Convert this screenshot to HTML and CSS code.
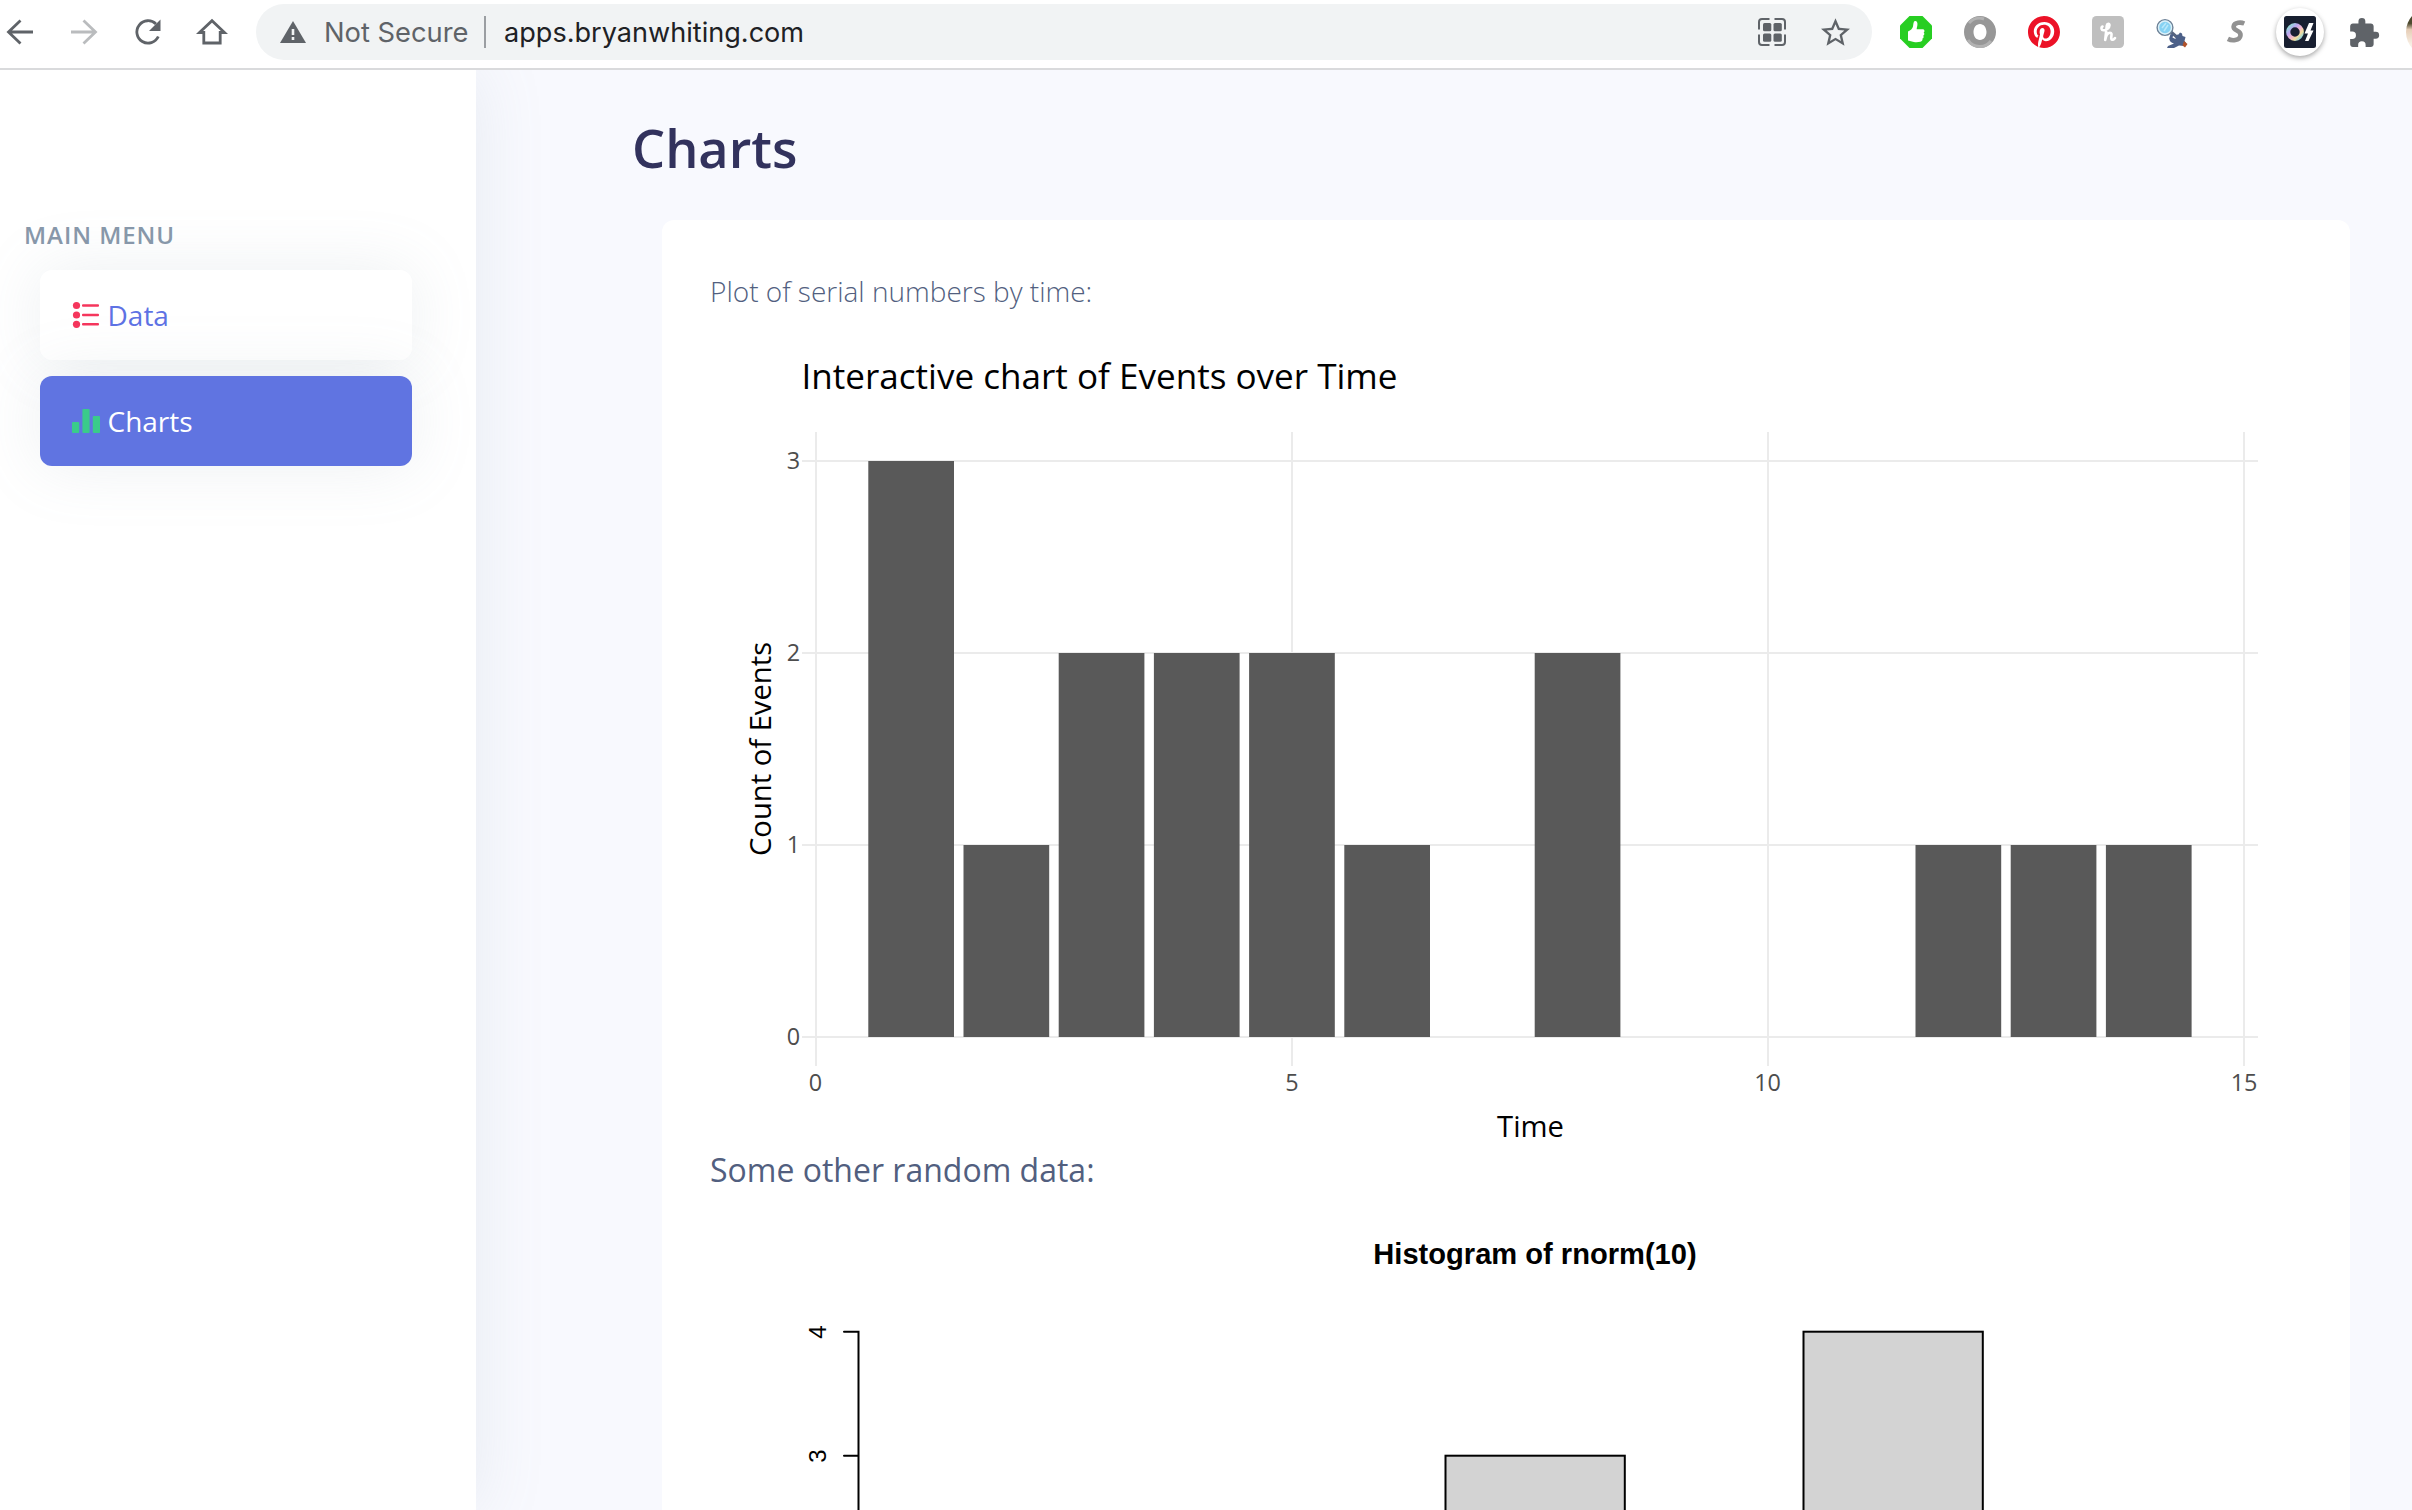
FILE: index.html
```html
<!DOCTYPE html>
<html lang="en">
<head>
<meta charset="utf-8">
<title>Charts</title>
<link rel="stylesheet" href="styles.css">
</head>
<body>
<header class="toolbar">
  <nav class="nav-buttons">
    <svg class="tool" viewBox="0 0 32 32"><path d="M29 16H5M16.500 4.500L4.500 16l12 11.500"/></svg>
    <svg class="tool tool-off" viewBox="0 0 32 32"><path d="M3 16h24M15.500 4.500l12 11.500-12 11.500"/></svg>
    <svg class="tool" viewBox="0 0 32 32"><path d="M26.300 20.500a11.200 11.200 0 1 1-2.300-12.500"/><path class="solid" d="M28.500 3.500v11.500h-11.500z"/></svg>
    <svg class="tool" viewBox="0 0 32 32"><path d="M3.500 16.500L16 4.700l12.500 11.800h-4.300V27H7.800V16.500z"/></svg>
  </nav>
  <div class="address">
    <svg class="warn" viewBox="0 0 26 22"><path d="M13 0L26 22H0z" fill="#5f6368"/><path d="M13 8v6M13 16v3" stroke="#f1f3f4" stroke-width="2.600"/></svg>
    <span class="insecure">Not Secure</span>
    <span class="divider"></span>
    <span class="url">apps.bryanwhiting.com</span>
    <svg class="qr" viewBox="0 0 30 30"><g fill="none" stroke="#5f6368" stroke-width="2"><path d="M12.500 2H5a3 3 0 0 0-3 3v7.500M17.500 2H25a3 3 0 0 1 3 3v7.500M12.500 28H5a3 3 0 0 1-3-3v-7.500M17.500 28H25a3 3 0 0 0 3-3v-7.500"/></g><g fill="#5f6368"><rect x="6" y="6" width="8.300" height="8.300" rx="1.500"/><rect x="16.500" y="6" width="8.300" height="8.300" rx="1.500"/><rect x="6" y="16.500" width="8.300" height="8.300" rx="1.500"/><rect x="16.500" y="16.500" width="8.300" height="8.300" rx="1.500"/></g></svg>
    <svg class="star" viewBox="2 2 20 19"><path fill="#5f6368" d="M22 9.240l-7.190-.620L12 2 9.190 8.630 2 9.240l5.460 4.730L5.820 21 12 17.270 18.180 21l-1.630-7.030L22 9.240zM12 15.400l-3.760 2.270 1-4.280-3.320-2.880 4.380-.380L12 6.100l1.710 4.040 4.380.380-3.320 2.880 1 4.280L12 15.400z"/></svg>
  </div>
  <div class="extensions">
    <svg viewBox="0 0 32 32"><path fill="#27ce22" d="M9.500 0h13L32 9.500v13L22.500 32h-13L0 22.500v-13z"/><path fill="#fff" d="M8 15.500c2.500-1 4.500-3 5-5 .4-2 .3-5 1.800-5.500 2-.4 3 1.500 2.600 4-.2 1.700-.7 3-.7 4.200h6c2 0 2.300 2.600.9 3.300 1.200.900.900 2.700-.4 3.200.8 1 .400 2.500-.8 2.900.5 1.200-.3 2.900-2 3.200-3 .6-6.500.5-8.500-.3L8 24.500z"/></svg>
    <svg viewBox="0 0 32 32"><path fill="#979797" fill-rule="evenodd" d="M16 0a16 16 0 1 0 0 32 16 16 0 0 0 0-32zm0 8c3.800 0 6.500 3.600 6.500 8s-2.700 8-6.500 8-6.500-3.600-6.500-8 2.700-8 6.500-8z"/><path fill="none" stroke="#b2b2b2" stroke-width="3" d="M4 24a14 14 0 0 0 23 1M5 7a14 14 0 0 1 15-4"/></svg>
    <svg viewBox="0 0 24 24"><circle cx="12" cy="12" r="11.500" fill="#fff"/><path fill="#ec1227" d="M12 0C5.373 0 0 5.372 0 12c0 5.084 3.163 9.426 7.627 11.174-.105-.949-.2-2.405.042-3.441.218-.937 1.407-5.965 1.407-5.965s-.359-.719-.359-1.782c0-1.668.967-2.914 2.171-2.914 1.023 0 1.518.769 1.518 1.690 0 1.029-.655 2.568-.994 3.995-.283 1.194.599 2.169 1.777 2.169 2.133 0 3.772-2.249 3.772-5.495 0-2.873-2.064-4.882-5.012-4.882-3.414 0-5.418 2.561-5.418 5.207 0 1.031.397 2.138.893 2.738.98.119.112.224.083.345l-.333 1.360c-.53.220-.174.267-.402.161-1.499-.698-2.436-2.889-2.436-4.649 0-3.785 2.750-7.262 7.929-7.262 4.163 0 7.398 2.967 7.398 6.931 0 4.136-2.607 7.464-6.227 7.464-1.216 0-2.359-.631-2.750-1.378l-.748 2.853c-.271 1.043-1.002 2.350-1.492 3.146 1.124.347 2.317.535 3.554.535 6.627 0 12-5.373 12-12C24 5.372 18.627 0 12 0z"/></svg>
    <svg viewBox="0 0 32 32"><rect width="32" height="32" rx="4.500" fill="#bfbfbf"/><path fill="none" stroke="#fff" stroke-width="2.600" stroke-linecap="round" stroke-linejoin="round" d="M10.500 10.500c-1.800 1-1.200 3.700.8 3.700 3.200 0 6.200-2.500 6.200-5 0-2-2.300-2-2.700.3L13.200 24c.8-4 2.500-7.200 4.800-7.200 2.800 0 .8 4 1.300 6 .5 1.600 2.500 1 3.700-.8"/></svg>
    <svg viewBox="0 0 32 32"><path d="M15 16l7 6" stroke="#56647f" stroke-width="3"/><circle cx="9" cy="11.500" r="7.800" fill="#86d2f3" stroke="#6f8297" stroke-width="1.600"/><circle cx="9" cy="11.500" r="6.500" fill="none" stroke="#dceff7" stroke-width="1.400"/><path d="M6 12l4-5M8 15l4-6" stroke="#b9e8fa" stroke-width="1.500"/><path fill="#4c6088" d="M14.500 18l3 .5-1 3 3 1.500c0-3 1.500-5 3-4.500l1.500-2 2 1 .5 2.500 3 1-1 4 1.500 2-2 3-5-.500-5 2.500H11l1-2 6-2.500c-3-.5-4.500-2.500-4.800-5z"/><path d="M28 25l3.500 3-2.500 3.500-2.500-2z" fill="#b0522b"/></svg>
    <svg viewBox="0 0 32 32"><path fill="none" stroke="#929292" stroke-width="4.600" d="M24.300 7.500c-3-1.300-10-1.500-10.700 3-.6 4.500 7.900 3.700 6.900 9.100-.9 5.200-8.600 5.400-12.600 3.300"/></svg>
    <div class="active-ext"><svg viewBox="0 0 32 32"><defs><linearGradient id="ring" x1="0" y1="0" x2="1" y2="1"><stop offset="0" stop-color="#8ee8d0"/><stop offset=".3" stop-color="#b8a6f2"/><stop offset=".55" stop-color="#f0b3cd"/><stop offset=".75" stop-color="#f3dc9c"/><stop offset="1" stop-color="#7ad5ec"/></linearGradient></defs><rect width="32" height="32" rx="2.500" fill="#181f30"/><circle cx="11" cy="16" r="6.800" fill="none" stroke="url(#ring)" stroke-width="4.200"/><path fill="#fff" d="M25 7h4.500l-3 7.500h3L24.500 25H21l3-7.500h-3.500z"/></svg></div>
    <svg class="puzzle" viewBox="2 1 21.500 21"><path fill="#5f6368" d="M20.500 11H19V7c0-1.100-.9-2-2-2h-4V3.500a2.500 2.500 0 0 0-5 0V5H4c-1.100 0-1.990.9-1.990 2v3.800H3.500a2.700 2.700 0 0 1 0 5.400H2V20c0 1.100.9 2 2 2h3.800v-1.500a2.700 2.700 0 0 1 5.400 0V22H17c1.100 0 2-.9 2-2v-4h1.500a2.500 2.500 0 0 0 0-5z"/></svg>
    <span class="avatar"></span>
  </div>
</header>
<div class="app">
  <aside class="sidebar">
    <h6 class="menu-title">MAIN MENU</h6>
    <a class="menu-item"><svg viewBox="0 0 28 28"><g fill="#f5365c"><circle cx="4.500" cy="4.500" r="3.600"/><circle cx="4.500" cy="14" r="3.600"/><circle cx="4.500" cy="23.300" r="3.600"/><rect x="10" y="3.200" width="17" height="2.600" rx="1"/><rect x="10" y="12.700" width="17" height="2.600" rx="1"/><rect x="10" y="22" width="17" height="2.600" rx="1"/></g></svg><span>Data</span></a>
    <a class="menu-item active"><svg viewBox="0 0 28 28"><g fill="#3acb8a"><rect y="15" width="7.200" height="11" rx="1"/><rect x="10.400" y="2" width="7.200" height="24" rx="1"/><rect x="20.800" y="9" width="7.200" height="17" rx="1"/></g></svg><span>Charts</span></a>
  </aside>
  <main class="content">
    <h1 class="page-title">Charts</h1>
    <section class="card">
      <p class="lead">Plot of serial numbers by time:</p>
      <svg class="events" viewBox="710 340 1600 810">
        <g class="grid" stroke-width="2">
          <path d="M802 461H2258M802 653H2258M802 845H2258M802 1037H2258"/>
          <path d="M816 432V1066M1292 432V1066M1768 432V1066M2244 432V1066"/>
        </g>
        <g fill="#595959">
          <rect x="868.300" y="461" width="85.700" height="576"/>
          <rect x="963.500" y="845" width="85.700" height="192"/>
          <rect x="1058.700" y="653" width="85.700" height="384"/>
          <rect x="1153.900" y="653" width="85.700" height="384"/>
          <rect x="1249.100" y="653" width="85.700" height="384"/>
          <rect x="1344.300" y="845" width="85.700" height="192"/>
          <rect x="1534.700" y="653" width="85.700" height="384"/>
          <rect x="1915.500" y="845" width="85.700" height="192"/>
          <rect x="2010.700" y="845" width="85.700" height="192"/>
          <rect x="2105.900" y="845" width="85.700" height="192"/>
        </g>
        <text class="plot-title" x="801.500" y="388.500">Interactive chart of Events over Time</text>
        <g class="ticks" text-anchor="end"><text x="800" y="469">3</text><text x="800" y="661">2</text><text x="800" y="853">1</text><text x="800" y="1045">0</text></g>
        <g class="ticks" text-anchor="middle"><text x="815.500" y="1091">0</text><text x="1292" y="1091">5</text><text x="1767.500" y="1091">10</text><text x="2244" y="1091">15</text></g>
        <text class="axis-title" text-anchor="middle" x="1530.500" y="1137">Time</text>
        <text class="axis-title" text-anchor="middle" transform="translate(770.500 749) rotate(-90)">Count of Events</text>
      </svg>
      <p class="sub">Some other random data:</p>
      <svg class="histogram" viewBox="710 1210 1600 340">
        <text class="hist-title" text-anchor="middle" x="1535" y="1264">Histogram of rnorm(10)</text>
        <g fill="none" stroke="#000" stroke-width="2" stroke-linecap="round"><path d="M858.500 1560V1331.700H844M858.500 1455.700H844"/></g>
        <g fill="#d3d3d3" stroke="#000" stroke-width="2"><rect x="1445.500" y="1455.700" width="179.300" height="120"/><rect x="1803.500" y="1331.700" width="179.300" height="240"/></g>
        <g class="hist-ticks" text-anchor="middle"><text transform="translate(826 1332) rotate(-90)">4</text><text transform="translate(826 1456) rotate(-90)">3</text></g>
      </svg>
    </section>
  </main>
</div>
</body>
</html>
```
FILE: styles.css
```css
* { box-sizing: border-box; }
html, body { margin: 0; height: 100%; overflow: hidden; }
body { display: flex; flex-direction: column; font-family: "Open Sans", sans-serif; background: #f8f9fe; }
svg { display: block; flex: none; }

.toolbar { display: flex; align-items: center; flex: none; height: 70px; padding-bottom: 4px; background: #fff; border-bottom: 2px solid #d9dadc; position: relative; z-index: 3; overflow: hidden; }
.nav-buttons { display: flex; gap: 32px; padding-left: 4px; width: 256px; flex: none; }
.tool { width: 32px; height: 32px; fill: none; stroke: #5f6368; stroke-width: 2.8; }
.tool .solid { fill: #5f6368; stroke: none; }
.tool-off { stroke: #babcbe; }
.address { display: flex; align-items: center; width: 1616px; height: 56px; flex: none; padding: 0 22px 0 24px; border-radius: 28px; background: #f1f3f4; font-family: Inter, sans-serif; font-size: 27.1px; white-space: nowrap; }
.warn { width: 26px; height: 22px; }
.insecure { width: 161px; padding-left: 18px; color: #5f6368; font-size: 27.3px; }
.divider { width: 2px; height: 32px; margin: 0 18px 0 17px; background: #9b9ea2; }
.url { flex: 1; color: #202124; }
.qr { width: 30px; height: 30px; margin-right: 34px; }
.star { width: 29px; height: 28px; }
.extensions { display: flex; align-items: center; gap: 32px; padding-left: 28px; }
.extensions svg { width: 32px; height: 32px; }
.active-ext { display: flex; align-items: center; justify-content: center; width: 48px; height: 48px; margin: 0 -8px; flex: none; border-radius: 50%; background: #fff; box-shadow: 0 2px 5px rgba(0,0,0,.35); }
.extensions .puzzle { width: 30px; height: 29px; margin-left: 2px; }
.avatar { width: 48px; height: 48px; margin-left: -6px; flex: none; border-radius: 50%; background: linear-gradient(#4d4a2f 0 32%, #e6cdb6 45%, #f7eee3 75%); }

.app { display: flex; flex: 1; min-height: 0; }
.sidebar { display: flex; flex-direction: column; width: 476px; flex: none; padding: 147px 64px 0 24px; background: #fff; box-shadow: 0 0 64px rgba(136,152,170,.15); }
.menu-title { margin: 0 0 17px; height: 36px; line-height: 36px; color: #8898aa; font-size: 24px; font-weight: 600; letter-spacing: .96px; }
.menu-item { display: flex; align-items: center; gap: 7.5px; height: 90px; margin: 0 0 16px 16px; padding-left: 32px; border-radius: 12px; background: #fff; box-shadow: 0 0 64px rgba(136,152,170,.15); color: #5e72e4; font-size: 28px; }
.menu-item svg { width: 28px; height: 28px; }
.menu-item.active { background: #6074e1; color: #fff; }

.content { display: flex; flex-direction: column; flex: 1; padding: 43px 62px 0 156px; }
.page-title { margin: 0 0 37px; height: 70px; line-height: 70px; color: #32325d; font-size: 52.3px; font-weight: 600; }
.card { display: flex; flex-direction: column; flex: none; width: 1688px; margin-left: 30px; padding: 47px 48px 0; border-radius: 12px; background: #fff; color: #525f7f; }
.lead { margin: 0 0 25px; height: 48px; line-height: 48px; font-size: 28px; font-weight: 300; }
.events { width: 1600px; height: 810px; overflow: visible; }
.grid { stroke: #ebebeb; }
.plot-title { font-size: 35.07px; }
.ticks { font-size: 23.4px; fill: #4d4d4d; }
.axis-title { font-size: 29.2px; }
.sub { margin: 0; height: 60px; line-height: 40px; font-size: 32px; }
.histogram { width: 1600px; height: 340px; }
.hist-title { font: bold 29.1px "Liberation Sans", sans-serif; }
.hist-ticks { font: 24px "Liberation Sans", sans-serif; }
```
